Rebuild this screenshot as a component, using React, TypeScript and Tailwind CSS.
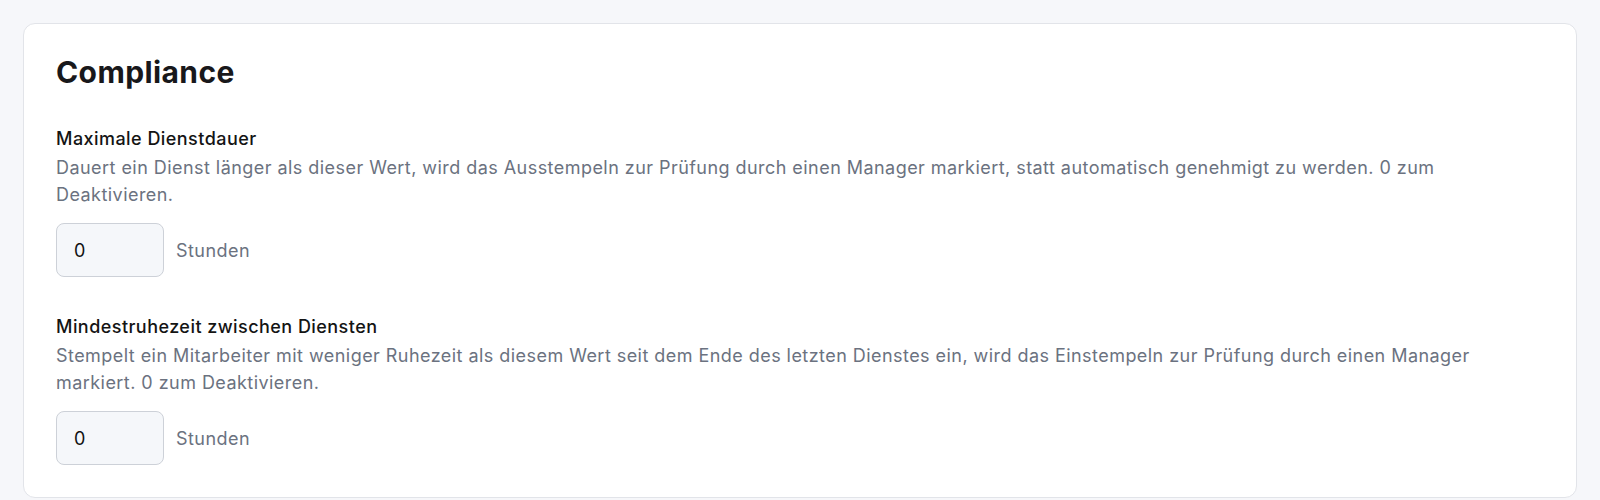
export default function App() {
  const sections = [
    {
      label: "Maximale Dienstdauer",
      desc: "Dauert ein Dienst länger als dieser Wert, wird das Ausstempeln zur Prüfung durch einen Manager markiert, statt automatisch genehmigt zu werden. 0 zum Deaktivieren.",
    },
    {
      label: "Mindestruhezeit zwischen Diensten",
      desc: "Stempelt ein Mitarbeiter mit weniger Ruhezeit als diesem Wert seit dem Ende des letzten Dienstes ein, wird das Einstempeln zur Prüfung durch einen Manager markiert. 0 zum Deaktivieren.",
    },
  ];
  return (
    <div
      className="min-h-screen bg-[#f6f7fa] px-[23px] pt-[23px]"
      style={{ fontFamily: "Inter, 'Noto Sans', sans-serif" }}
    >
      <div className="rounded-xl border border-[#e2e4e9] bg-white px-8 pt-[30px] pb-8">
        <h2 className="text-[30px] leading-[36px] font-bold text-[#18181b] tracking-[0.4px]">
          Compliance
        </h2>
        {sections.map((s, i) => (
          <div key={i} className={i === 0 ? "mt-[35px]" : "mt-[36px]"}>
            <div className="text-[18px] leading-[27px] font-medium text-[#141414] tracking-[0.45px]">
              {s.label}
            </div>
            <p className="mt-[2px] max-w-[1460px] text-[18px] leading-[27px] text-[#6b7280] tracking-[0.45px]">
              {s.desc}
            </p>
            <div className="mt-[15px] flex items-center">
              <input
                type="text"
                defaultValue="0"
                className="h-[54px] w-[108px] rounded-lg border border-[#cdd1d8] bg-[#f5f7fa] px-[17px] text-[18px] text-[#111] outline-none"
              />
              <span className="ml-3 text-[18px] text-[#6b7280] tracking-[0.45px]">Stunden</span>
            </div>
          </div>
        ))}
      </div>
    </div>
  );
}
